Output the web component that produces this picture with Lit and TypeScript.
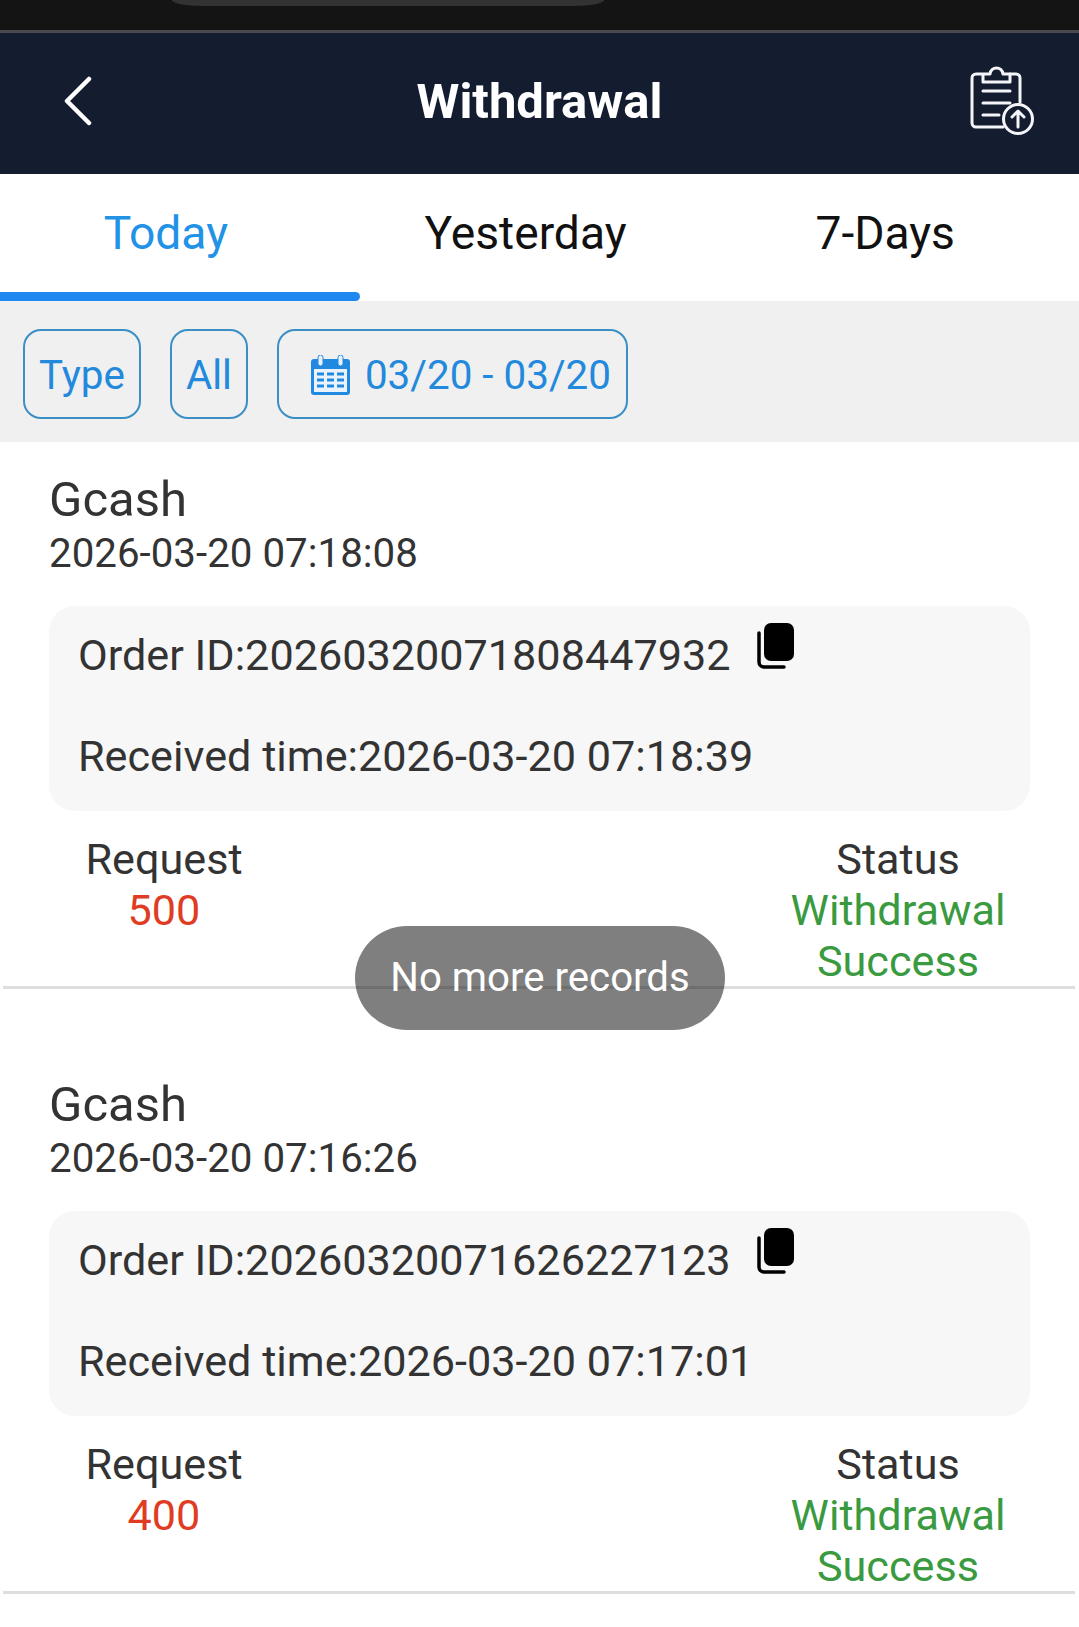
import { LitElement, html, css } from "lit";
import { customElement } from "lit/decorators.js";

const records = [
  { name: "Gcash", date: "2026-03-20 07:18:08", order: "20260320071808447932", received: "2026-03-20 07:18:39", amount: "500" },
  { name: "Gcash", date: "2026-03-20 07:16:26", order: "20260320071626227123", received: "2026-03-20 07:17:01", amount: "400" },
];

@customElement("app-root")
export class AppRoot extends LitElement {
  static styles = css`
    :host {
      display: block;
      position: relative;
      width: 1079px;
      height: 1627px;
      overflow: hidden;
      background: #fff;
      font-family: Roboto, "Liberation Sans", sans-serif;
      color: #333;
    }
    .status {
      height: 30px;
      background: #141414;
      display: flex;
      justify-content: flex-start;
      padding-left: 172px;
    }
    .notch {
      width: 432px;
      height: 6px;
      background: #333;
      border-radius: 0 0 30px 30px / 0 0 6px 6px;
    }
    .header {
      height: 141px;
      background: #141c30;
      border-top: 3px solid #4a4a4e;
      display: grid;
      grid-template-columns: 1fr auto 1fr;
      align-items: center;
      padding: 0 45px 0 62px;
    }
    .header svg {
      display: block;
    }
    .back {
      margin-top: -6px;
    }
    .upload {
      margin-top: -7px;
      justify-self: end;
    }
    .title {
      font-size: 49px;
      font-weight: 700;
      color: #fff;
      margin: -5px 0 0 -17px;
    }
    .tabs {
      display: flex;
      height: 127px;
    }
    .tab {
      flex: 1;
      display: flex;
      flex-direction: column;
      font-size: 46.2px;
      color: #111;
    }
    .tab span {
      flex: 1;
      display: flex;
      align-items: center;
      justify-content: center;
      padding-right: 28px;
    }
    .tab i {
      height: 9px;
      border-radius: 0 5px 5px 0;
    }
    .tab.active {
      color: #2192e6;
    }
    .tab.active i {
      background: #1e88f0;
    }
    .filters {
      height: 141px;
      box-sizing: border-box;
      background: #f0f0f0;
      display: flex;
      align-items: center;
      gap: 29px;
      padding: 4px 0 0 23px;
    }
    .chip {
      height: 90px;
      box-sizing: border-box;
      border: 2px solid #3a8fc4;
      border-radius: 18px;
      display: flex;
      align-items: center;
      padding: 3px 14px 0;
      font-size: 40.4px;
      color: #2289dc;
    }
    .chip.date {
      gap: 14px;
      padding: 3px 15px 0 31px;
    }
    .item {
      margin-bottom: 57.5px;
      padding-top: 30px;
    }
    .name {
      font-size: 49px;
      line-height: 55px;
      padding-left: 49px;
    }
    .when {
      font-size: 40.3px;
      line-height: 54px;
      padding-left: 49px;
    }
    .detail {
      margin: 25px 49px 0 49px;
      padding: 24px 29px 29px;
      background: #f7f7f7;
      border-radius: 26px;
      font-size: 43.2px;
      line-height: 51px;
    }
    .order {
      display: flex;
      align-items: flex-start;
      gap: 26px;
      margin-bottom: 50px;
    }
    .order svg {
      margin-top: -7px;
      flex: none;
    }
    .stats {
      display: flex;
      justify-content: space-between;
      padding: 23px 51px 0 34px;
      font-size: 43.2px;
      line-height: 51px;
      text-align: center;
    }
    .stats > div {
      width: 260px;
    }
    .red {
      color: #e03c24;
    }
    .green {
      color: #3a9a3f;
    }
    .line {
      height: 3px;
      margin: -1px 4px 0 3px;
      background: #dedede;
    }
    .toast {
      position: absolute;
      left: 355px;
      top: 926px;
      width: 370px;
      height: 104px;
      box-sizing: border-box;
      padding-bottom: 2px;
      border-radius: 52px;
      background: rgba(0, 0, 0, 0.5);
      color: #fff;
      font-size: 40.2px;
      display: flex;
      align-items: center;
      justify-content: center;
    }
  `;

  renderRecord(r: (typeof records)[number]) {
    return html`
      <div class="item">
        <div class="name">${r.name}</div>
        <div class="when">${r.date}</div>
        <div class="detail">
          <div class="order">
            <span>Order ID:${r.order}</span>
            <svg width="37" height="46" viewBox="0 0 37 46">
              <rect x="7" y="0" width="30" height="38" rx="7" fill="#000" />
              <path d="M2 10V39a5 5 0 0 0 5 5H27" fill="none" stroke="#000" stroke-width="3.5" stroke-linecap="round" />
            </svg>
          </div>
          <div>Received time:${r.received}</div>
        </div>
        <div class="stats">
          <div>Request<br /><span class="red">${r.amount}</span></div>
          <div>Status<br /><span class="green">Withdrawal Success</span></div>
        </div>
        <div class="line"></div>
      </div>
    `;
  }

  render() {
    return html`
      <div class="status"><div class="notch"></div></div>
      <div class="header">
        <svg class="back" width="30" height="50" viewBox="0 0 30 50">
          <path d="M27 3 5 25l22 22" fill="none" stroke="#fff" stroke-width="4.5" stroke-linecap="round" stroke-linejoin="round" />
        </svg>
        <div class="title">Withdrawal</div>
        <svg class="upload" width="64" height="70" viewBox="0 0 64 70" fill="none" stroke="#f4f5f8" stroke-width="3" stroke-linecap="round" stroke-linejoin="round">
          <path d="M12 9H6a4 4 0 0 0-4 4v45a4 4 0 0 0 4 4h27" />
          <path d="M40 9h6a4 4 0 0 1 4 4v24" />
          <path d="M13 17V9h7c1-8 12-8 13 0h7v8z" />
          <path d="M13 26h27M13 38h27M13 50h16" />
          <circle cx="48" cy="54" r="14.5" />
          <path d="M48 62V47M42 52l6-6 6 6" />
        </svg>
      </div>
      <div class="tabs">
        <div class="tab active"><span>Today</span><i></i></div>
        <div class="tab"><span>Yesterday</span><i></i></div>
        <div class="tab"><span>7-Days</span><i></i></div>
      </div>
      <div class="filters">
        <div class="chip">Type</div>
        <div class="chip">All</div>
        <div class="chip date">
          <svg width="41" height="40" viewBox="0 0 41 40">
            <rect x="1" y="4" width="39" height="36" rx="3" fill="#2289e0" />
            <rect x="4" y="14" width="33" height="23" fill="#eaf3fb" />
            <rect x="8" y="0" width="5" height="11" rx="2.5" fill="#eaf3fb" stroke="#2289e0" stroke-width="1" />
            <rect x="28" y="0" width="5" height="11" rx="2.5" fill="#eaf3fb" stroke="#2289e0" stroke-width="1" />
            <path d="M7 19h7M17 19h7M27 19h7M7 25h7M17 25h7M27 25h7M7 31h7M17 31h7M27 31h7" stroke="#2289e0" stroke-width="3" />
          </svg>
          <span>03/20 - 03/20</span>
        </div>
      </div>
      ${records.map((r) => this.renderRecord(r))}
      <div class="toast">No more records</div>
    `;
  }
}
